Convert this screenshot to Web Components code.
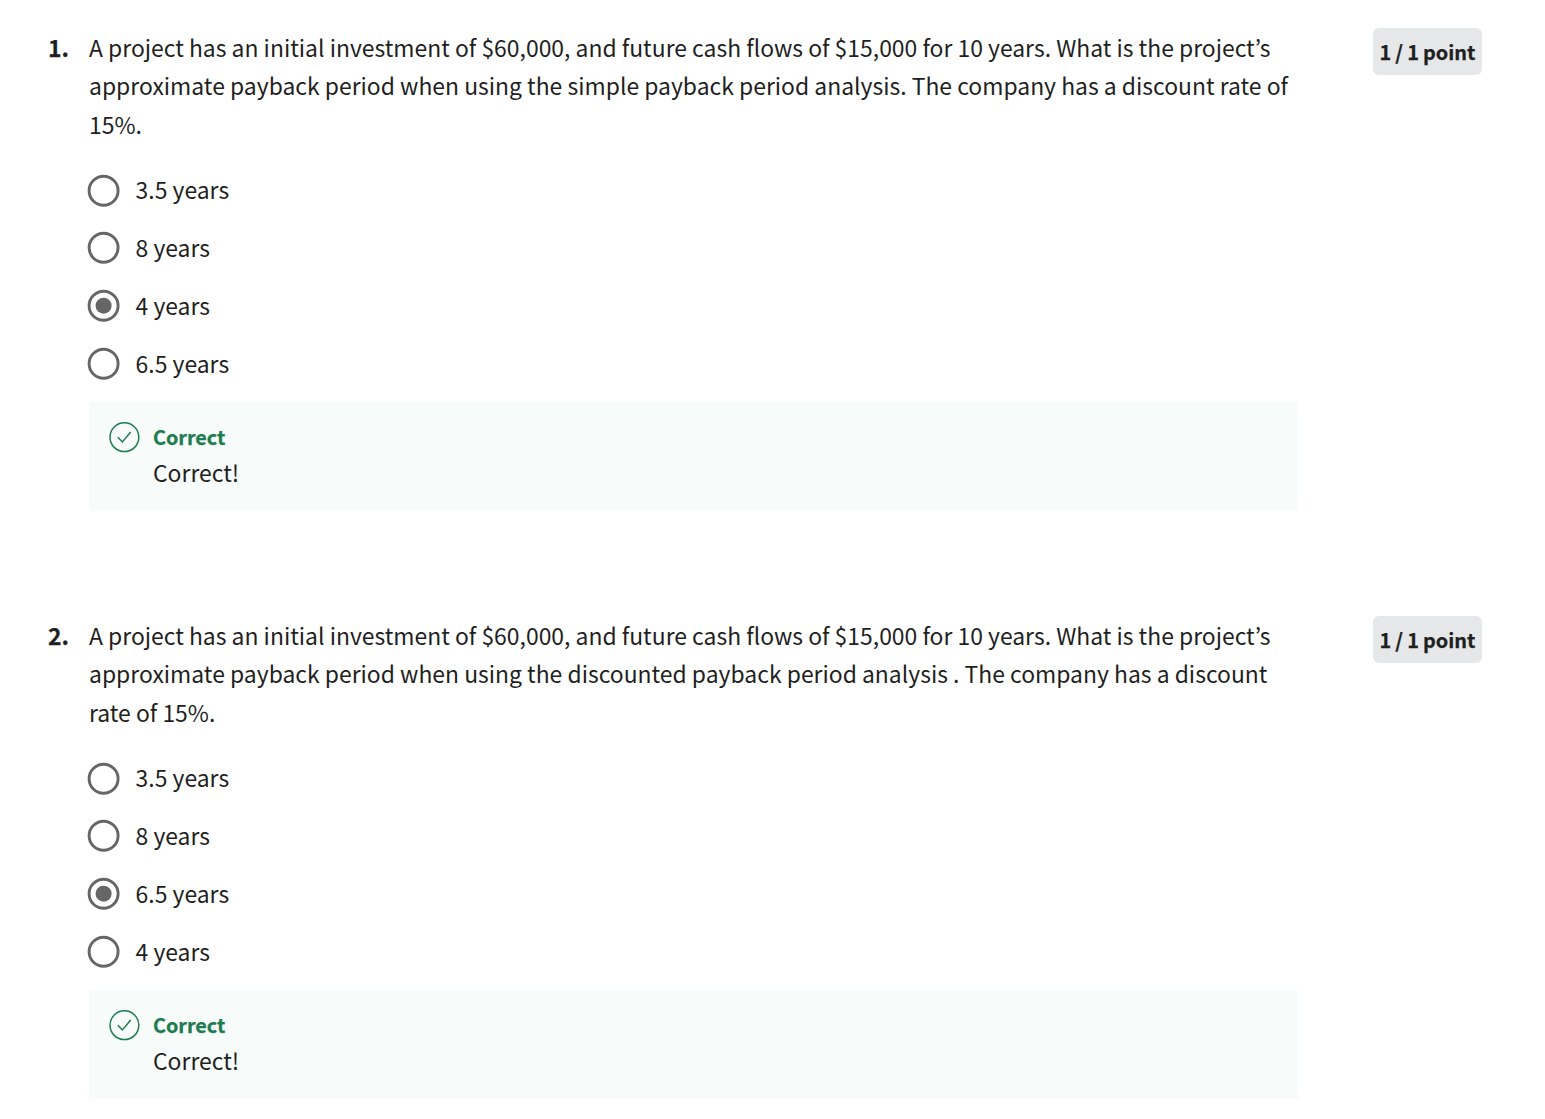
<!DOCTYPE html>
<html lang="en"><head><meta charset="utf-8"><title>Quiz</title>
<style>body{margin:0;background:#fff;color:#1f1f1f;font-family:"Noto Sans CJK KR","Noto Sans",sans-serif;font-size:22.91px}</style></head>
<body>
<quiz-page></quiz-page>
<script>
const define=(name,html,setup)=>customElements.define(name,class extends HTMLElement{
  connectedCallback(){
    if(this.shadowRoot)return;
    const r=this.attachShadow({mode:"open"});
    const t=document.createElement("template");t.innerHTML=html;
    r.append(t.content.cloneNode(true));
    if(setup)setup(this,r);
  }
});
define("quiz-option",`<style>
:host{display:flex;align-items:center;height:57.75px;gap:16px}
svg{width:32px;height:32px;flex:none;display:block;margin-left:-1.4px;overflow:visible}
.t{white-space:nowrap;line-height:36px;padding-bottom:2.4px}
.dot{display:none}:host([checked]) .dot{display:block}
</style><svg viewBox="0 0 32 32"><circle cx="15.6" cy="15.7" r="14.5" fill="none" stroke="#666" stroke-width="2.9"/><circle class="dot" cx="15.6" cy="15.7" r="8" fill="#666"/></svg><span class="t"><slot></slot></span>`);
define("quiz-feedback",`<style>
:host{display:flex;box-sizing:border-box;height:109px;padding:18px 20px;background:#f7fbf9;gap:13px;margin-top:9.4px}
svg{width:31px;height:31px;flex:none;margin-top:1.5px}
.h{font-weight:700;color:#1d7c50;font-size:19.8px;line-height:33px;margin-bottom:2px;-webkit-text-stroke:.25px}
.b{line-height:35px}
</style><svg viewBox="0 0 31 31" fill="none" stroke="#1d7c50" stroke-width="1.5"><circle cx="15.4" cy="15.2" r="14.4"/><path d="M8.8 15.3l4.6 4.7 8.3-9.9"/></svg><div><div class="h">Correct</div><div class="b"><slot></slot></div></div>`);
define("quiz-points",`<style>
:host{display:flex;align-items:center;justify-content:center;box-sizing:border-box;width:109px;height:47px;border-radius:6px;background:#e5e7e8;font-weight:700;font-size:19.9px;line-height:30px;white-space:nowrap;word-spacing:-.4px;-webkit-text-stroke:.25px}
</style><span><slot></slot></span>`);
define("quiz-question",`<style>
:host{display:grid;grid-template-columns:41px 1209px 109px;height:483px;align-items:start}
.n{font-weight:700;line-height:38.4px;-webkit-text-stroke:.25px}
.p{line-height:38.4px;white-space:nowrap;margin-bottom:18.6px}
::slotted(quiz-points){margin-left:75px}
</style><div class="n"></div><div><div class="p"><slot name="prompt"></slot></div><slot></slot></div><slot name="points"></slot>`,(el,r)=>{r.querySelector(".n").textContent=el.getAttribute("number")+"."});
const q=(n,lines,opts,sel)=>`<quiz-question number="${n}"><span slot="prompt">${lines.join("<br>")}</span>${opts.map((o,i)=>`<quiz-option${i===sel?" checked":""}>${o}</quiz-option>`).join("")}<quiz-feedback>Correct!</quiz-feedback><quiz-points slot="points">1 / 1 point</quiz-points></quiz-question>`;
const first="A project has an initial investment of $60,000, and future cash flows of $15,000 for 10 years. What is the project’s";
define("quiz-page",`<style>:host{display:flex;flex-direction:column;gap:105px;padding:28px 0 0 48px}</style>`
+q(1,[first,"approximate payback period when using the simple payback period analysis. The company has a discount rate of","15%."],["3.5 years","8 years","4 years","6.5 years"],2)
+q(2,[first,"approximate payback period when using the discounted payback period analysis . The company has a discount","rate of 15%."],["3.5 years","8 years","6.5 years","4 years"],2));
</script></body></html>
